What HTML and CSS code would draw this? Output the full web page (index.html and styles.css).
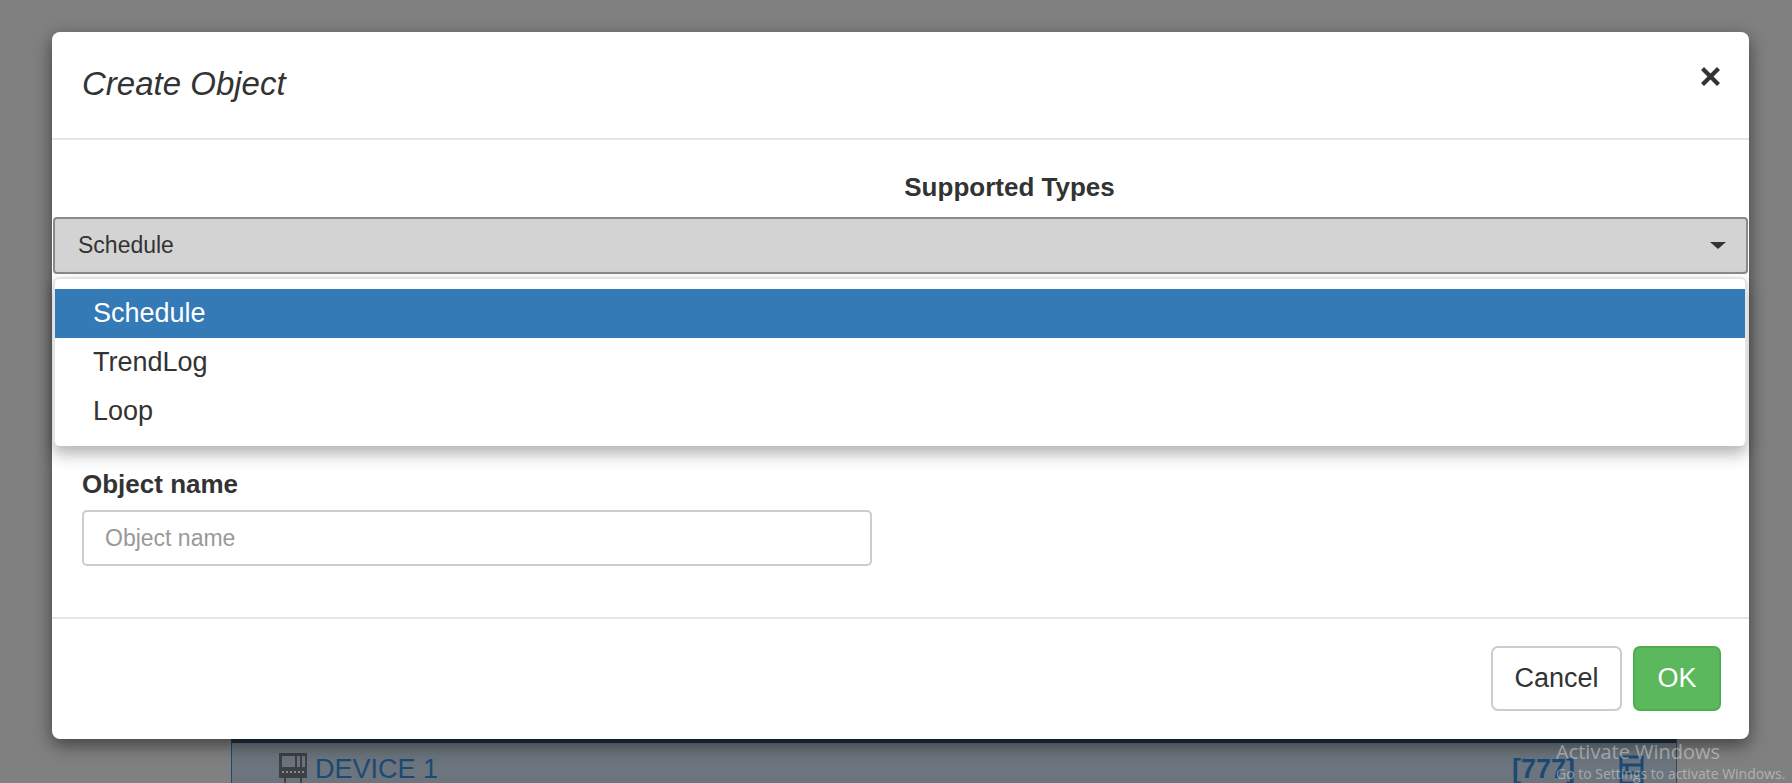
FILE: index.html
```html
<!DOCTYPE html>
<html lang="en">
<head>
    <meta charset="UTF-8">
    <meta name="viewport" content="width=device-width, initial-scale=1.0">
    <title>Create Object</title>
    <link rel="stylesheet" href="styles.css">
</head>
<body>
    <!-- Page behind the backdrop, only the bottom row shows -->
    <div class="device-panel">
        <div class="device-row">
            <svg class="device-icon" width="28" height="34" viewBox="0 0 28 34">
                <path fill="#3d4146" fill-rule="evenodd" d="M0 0h28v25H0zM3 3v11h13V3zM18 3v11h3V3zM23 3v11h3V3z"/>
                <path fill="#8a8e92" d="M3 18h2v2H3zM7 18h2v2H7zM11 18h2v2H11zM15 18h2v2H15zM19 18h2v2h-2zM23 18h2v2h-2z"/>
                <path fill="#3d4146" d="M5 25h2v9H5zM21 25h2v9h-2z"/>
            </svg>
            <span class="device-name">DEVICE 1</span>
            <span class="device-id">[777]</span>
            <svg class="list-icon" width="25" height="30" viewBox="0 0 25 30">
                <path fill="none" stroke="#1c4a75" stroke-width="3" d="M2 2h21v26H2zM2 10h21M2 18h21M8 10v8"/>
            </svg>
        </div>
    </div>

    <div class="modal">
        <div class="modal-header">
            <h4 class="modal-title">Create Object</h4>
            <svg class="close-icon" width="19" height="19" viewBox="0 0 19 19">
                <path fill="#333" d="M3 0l6.500 6.500L16 0l3 3-6.500 6.500L19 16l-3 3-6.500-6.500L3 19l-3-3 6.500-6.500L0 3z"/>
            </svg>
        </div>
        <div class="modal-body">
            <div class="types-label">Supported Types</div>
            <div class="select-box">
                <span>Schedule</span>
                <span class="caret"></span>
            </div>
            <ul class="dropdown">
                <li class="active">Schedule</li>
                <li>TrendLog</li>
                <li>Loop</li>
            </ul>
            <div class="field">
                <label class="field-label">Object name</label>
                <input class="field-input" type="text" placeholder="Object name">
            </div>
        </div>
        <div class="modal-footer">
            <button class="btn btn-cancel">Cancel</button>
            <button class="btn btn-ok">OK</button>
        </div>
    </div>

    <!-- Windows watermark -->
    <div class="watermark">
        <div class="watermark-title">Activate Windows</div>
        <div class="watermark-sub">Go to Settings to activate Windows.</div>
    </div>
</body>
</html>
```

FILE: styles.css
```css
html, body {
    height: 100%;
}
body {
    margin: 0;
    height: 783px;
    overflow: hidden;
    background-color: #808080;
    font-family: "Liberation Sans", Arial, sans-serif;
    color: #333;
    position: relative;
}
/* Page behind the modal */
.device-panel {
    margin: 739px 0 0 231px;
    width: 1446px;
    height: 44px;
    box-sizing: border-box;
    background-color: #6c757d;
    border-left: 1px solid #1c4a75;
    border-right: 1px solid #3f4750;
    border-top: 4px solid #1f3242;
}
.device-row {
    display: flex;
    align-items: flex-start;
    padding: 10px 32px 0 47px;
}
.device-name {
    margin-left: 8px;
    font-size: 27px;
    line-height: 32px;
    color: #1c4a75;
}
.device-id {
    margin-left: auto;
    font-size: 27px;
    line-height: 32px;
    font-weight: bold;
    color: #1c4a75;
}
.list-icon {
    margin: 2px 0 0 44px;
}
/* Modal */
.modal {
    position: absolute;
    top: 32px;
    left: 52px;
    width: 1697px;
    height: 707px;
    display: flex;
    flex-direction: column;
    box-sizing: border-box;
    background-color: #fff;
    border-radius: 8px;
    box-shadow: 0 6px 18px rgba(0, 0, 0, 0.5);
}
.modal-header {
    display: flex;
    justify-content: space-between;
    align-items: flex-start;
    height: 108px;
    box-sizing: border-box;
    padding: 0 30px;
    border-bottom: 2px solid #e5e5e5;
}
.modal-title {
    margin: 33px 0 0;
    font-size: 33px;
    line-height: 38px;
    font-weight: normal;
    font-style: italic;
}
.close-icon {
    margin: 35px -1px 0 0;
}
.modal-body {
    position: relative;
    flex: 1;
}
.types-label {
    margin: 32px 0 0;
    padding-left: 218px;
    text-align: center;
    font-size: 26px;
    line-height: 30px;
    font-weight: bold;
}
.select-box {
    display: flex;
    justify-content: space-between;
    align-items: center;
    height: 57px;
    margin: 15px 1px 0;
    padding: 0 20px 0 23px;
    box-sizing: border-box;
    background-color: #d3d3d3;
    border: 2px solid #8a8a8a;
    border-radius: 4px;
    font-size: 23px;
}
.caret {
    width: 0;
    height: 0;
    border-top: 7px solid #333;
    border-left: 8px solid transparent;
    border-right: 8px solid transparent;
}
.dropdown {
    position: absolute;
    top: 137px;
    left: 1px;
    right: 2px;
    margin: 0;
    padding: 10px 0 0;
    height: 169px;
    box-sizing: border-box;
    list-style: none;
    background-color: #fff;
    border: 2px solid #e4e4e4;
    border-top-width: 2px;
    border-bottom: 0;
    border-radius: 6px;
    box-shadow: 0 8px 16px rgba(0, 0, 0, 0.3);
    font-size: 27px;
}
.dropdown li {
    height: 49px;
    line-height: 49px;
    padding-left: 38px;
}
.dropdown .active {
    background-color: #337ab7;
    color: #fff;
}
.field {
    margin: 195px 0 0 30px;
}
.field-label {
    display: block;
    margin-bottom: 11px;
    font-size: 26px;
    line-height: 30px;
    font-weight: bold;
}
.field-input {
    display: block;
    width: 790px;
    height: 56px;
    box-sizing: border-box;
    padding: 0 21px;
    border: 2px solid #ccc;
    border-radius: 5px;
    font-family: inherit;
    font-size: 23px;
    color: #333;
}
.field-input::placeholder {
    color: #999;
}
.modal-footer {
    display: flex;
    justify-content: flex-end;
    gap: 11px;
    height: 122px;
    box-sizing: border-box;
    padding: 27px 28px 0 0;
    border-top: 2px solid #e5e5e5;
}
.btn {
    height: 65px;
    box-sizing: border-box;
    border-radius: 7px;
    font-family: inherit;
    font-size: 27px;
}
.btn-cancel {
    width: 131px;
    background-color: #fff;
    border: 2px solid #ccc;
    color: #333;
}
.btn-ok {
    width: 88px;
    background-color: #5cb85c;
    border: 2px solid #4cae4c;
    color: #fff;
}
/* Windows watermark */
.watermark {
    position: absolute;
    top: 740px;
    left: 1556px;
    font-family: "Open Sans", sans-serif;
    color: rgba(255, 255, 255, 0.4);
    white-space: nowrap;
}
.watermark-title {
    font-size: 20px;
    line-height: 24px;
}
.watermark-sub {
    font-size: 14px;
    line-height: 20px;
}
```
